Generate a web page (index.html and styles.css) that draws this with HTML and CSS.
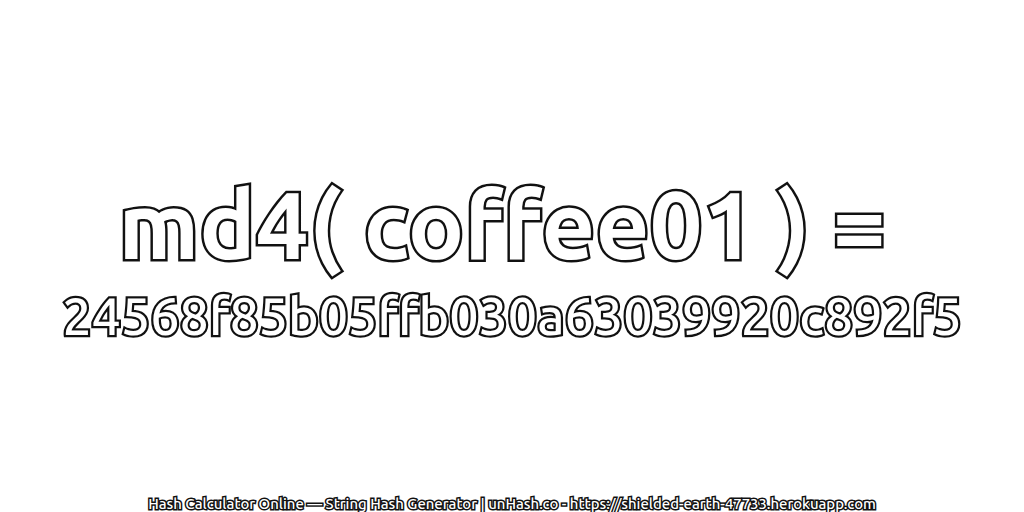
FILE: index.html
```html
<!DOCTYPE html>
<html lang="en">
<head>
  <meta charset="UTF-8" />
  <title>md4( coffee01 )</title>
  <link rel="stylesheet" href="styles.css">
</head>
<body>
  <main class="hash-card">
    <h1 class="hash-input">md4( coffee01 ) =</h1>
    <h2 class="hash-output">24568f85b05ffb030a63039920c892f5</h2>
  </main>
  <footer class="site-footer">Hash Calculator Online — String Hash Generator | unHash.co - https://shielded-earth-47733.herokuapp.com</footer>
</body>
</html>
```

FILE: styles.css
```css
body {
  margin: 0;
  width: 1024px;
  height: 512px;
  overflow: hidden;
  display: flex;
  flex-direction: column;
  background: #fff;
  font-family: "Ubuntu", "Noto Sans", "DejaVu Sans", sans-serif;
}

.hash-card {
  flex-grow: 1;
  display: flex;
  flex-direction: column;
  align-items: center;
  justify-content: center;
  padding-top: 19px;
}

.hash-input,
.hash-output,
.site-footer {
  margin: 0;
  white-space: nowrap;
  color: #fff;
  paint-order: stroke fill;
}

.hash-input {
  font-size: 94px;
  font-weight: 700;
  line-height: 112px;
  padding-right: 20px;
  -webkit-text-stroke: 5px #111;
}

.hash-output {
  margin-top: 5px;
  font-size: 52px;
  font-weight: 500;
  line-height: 62px;
  -webkit-text-stroke: 4.5px #111;
}

.site-footer {
  text-align: center;
  font-size: 14.9px;
  font-weight: 500;
  line-height: 16px;
  -webkit-text-stroke: 3px #111;
}
```
